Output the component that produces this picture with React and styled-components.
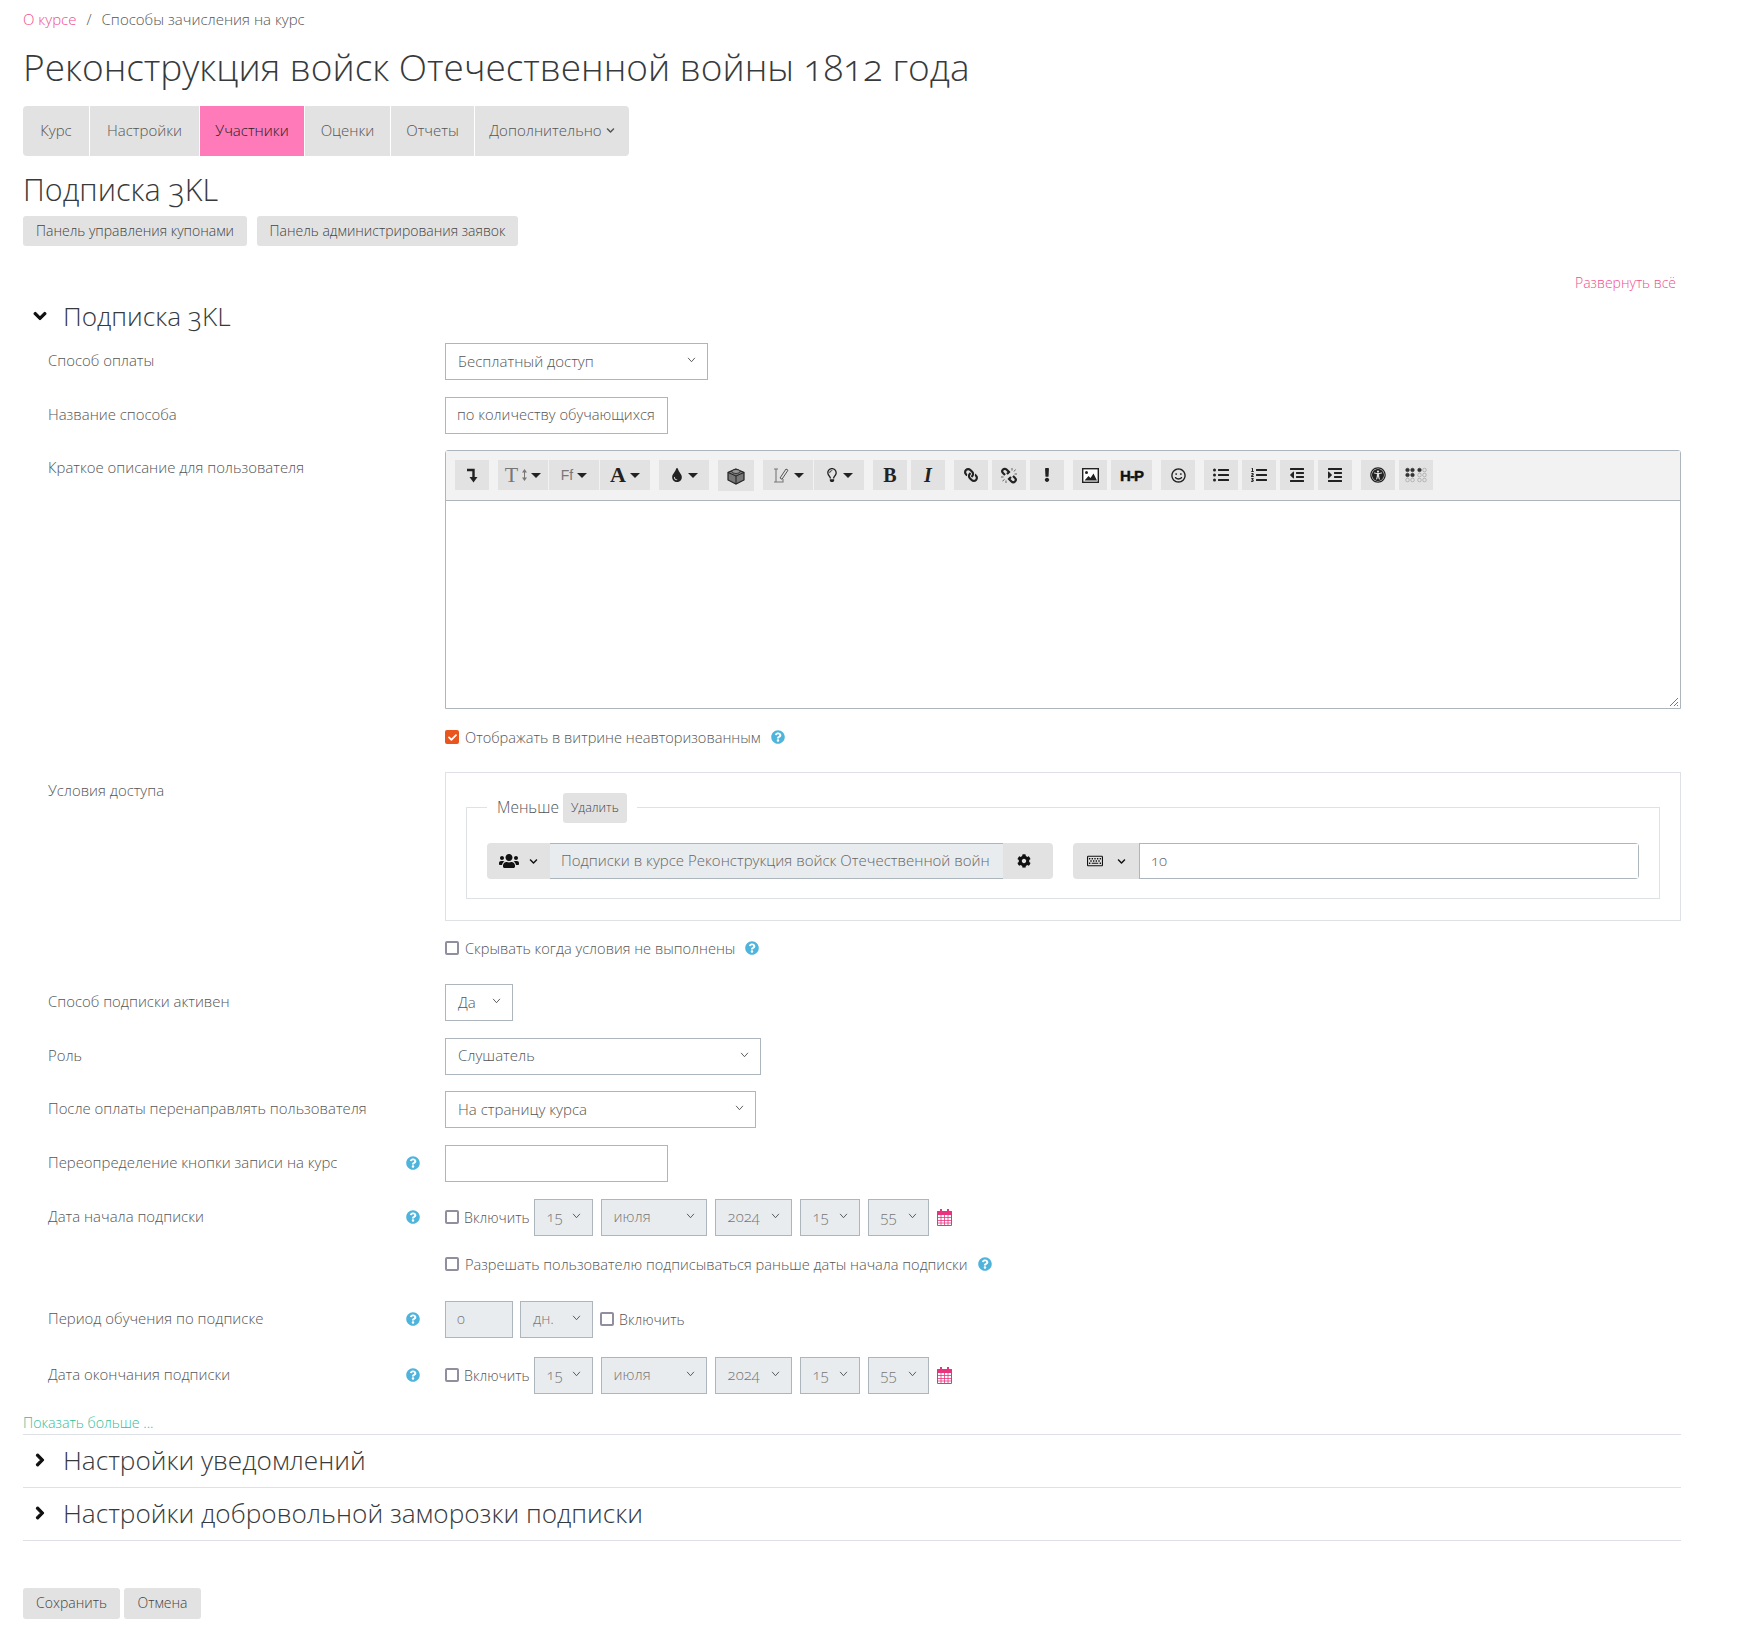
import React from "react";
import styled, { createGlobalStyle } from "styled-components";
import {
  FaChevronDown, FaChevronRight, FaCog, FaUsers, FaRegKeyboard, FaQuestionCircle, FaCheck,
  FaTint, FaRegLightbulb, FaLink, FaExclamation, FaRegSmile,
  FaListUl, FaListOl, FaOutdent, FaIndent, FaUniversalAccess,
} from "react-icons/fa";

const GlobalStyle = createGlobalStyle`
  body {
    margin: 0;
    background: #fff;
    color: #555;
    font-family: "Open Sans", "Noto Sans", sans-serif;
    font-weight: 300;
    font-size: 15px;
    font-variant-numeric: oldstyle-nums;
  }
`;

const Page = styled.div`
  padding: 0 57px 0 23px;
  height: 1649px;
  box-sizing: border-box;
`;

const Breadcrumb = styled.div`
  display: flex;
  gap: 10px;
  height: 38px;
  align-items: center;
  font-size: 15px;
  color: #555;
`;
const PinkLink = styled.a`
  color: #f0508f;
`;
const Title = styled.h1`
  margin: 0;
  font-size: 37px;
  font-weight: 300;
  color: #373a3c;
  line-height: 58px;
  height: 68px;
`;
const Tabs = styled.div`
  display: inline-flex;
  gap: 1px;
  height: 50px;
  border-radius: 4px;
  overflow: hidden;
`;
const Tab = styled.div`
  display: flex;
  align-items: center;
  gap: 4px;
  padding: 0 0 2px;
  width: ${(p) => p.$w}px;
  box-sizing: border-box;
  justify-content: center;
  background: ${(p) => (p.$active ? "#ff7ab8" : "#e2e2e2")};
  color: ${(p) => (p.$active ? "#222" : "#555")};
`;
const SubTitle = styled.h2`
  margin: 0;
  font-size: 30.5px;
  font-weight: 300;
  color: #373a3c;
  line-height: 36px;
  padding-top: 15px;
  height: 60px;
  box-sizing: border-box;
`;
const ButtonRow = styled.div`
  display: flex;
  gap: ${(p) => p.$gap || 10}px;
`;
const GrayButton = styled.div`
  display: flex;
  align-items: center;
  justify-content: center;
  box-sizing: border-box;
  padding-bottom: 2px;
  height: ${(p) => p.$h || 30}px;
  width: ${(p) => p.$w}px;
  background: #e2e2e2;
  border-radius: 3px;
  color: #444;
  font-size: ${(p) => p.$size || 14}px;
`;
const ExpandAll = styled.div`
  text-align: right;
  padding-right: 5px;
  margin-top: 26px;
  line-height: 22px;
  color: #f0508f;
  font-size: 14px;
`;
const SectionHead = styled.div`
  display: flex;
  align-items: center;
  height: ${(p) => p.$h}px;
  padding: 0 0 2px 10px;
  margin-bottom: ${(p) => p.$mb || 0}px;
  font-size: 26.2px;
  color: #373a3c;
  border-bottom: ${(p) => (p.$line ? "1px solid #dee2e6" : "none")};
  box-sizing: border-box;
`;
const Arrow = styled.span`
  display: flex;
  width: 30px;
  color: #111;
  font-size: 14px;
  svg {
    stroke: currentColor;
    stroke-width: 40;
  }
`;
const Row = styled.div`
  display: grid;
  grid-template-columns: 397px 1fr;
  padding-left: 25px;
  min-height: ${(p) => p.$h || 37}px;
  margin-top: ${(p) => p.$mt || 0}px;
  margin-bottom: ${(p) => (p.$mb === undefined ? 16.6 : p.$mb)}px;
`;
const Label = styled.div`
  display: flex;
  justify-content: space-between;
  padding: ${(p) => p.$pt || 6}px 25px 0 0;
  line-height: 22px;
  font-size: 14.9px;
  color: #555;
`;
const Help = styled(FaQuestionCircle)`
  color: #4fb4dc;
  font-size: 14px;
  margin-left: ${(p) => p.$ml || 0}px;
  flex: none;
`;
const LabelHelp = styled(Help)`
  margin-top: 5px;
`;
const Field = styled.div`
  display: flex;
  align-items: center;
  gap: ${(p) => p.$gap || 0}px;
`;
const CheckGroup = styled.span`
  display: flex;
  align-items: center;
  gap: 5px;
  font-size: 14.2px;
  margin-right: ${(p) => p.$mr || 0}px;
`;
const SelectBox = styled.div`
  position: relative;
  display: flex;
  align-items: center;
  box-sizing: border-box;
  width: ${(p) => p.$w}px;
  height: 37px;
  padding: 0 0 2px 12px;
  border: 1px solid #adb5bd;
  background: ${(p) => (p.$off ? "#e9ecef" : "#fff")};
  color: ${(p) => (p.$off ? "#777" : "#555")};
`;
const SelectArrow = styled.svg`
  position: absolute;
  right: 11px;
  top: 13px;
  width: 9px;
  height: 6px;
  fill: none;
  stroke: #444;
  stroke-width: 1;
`;
const Input = styled.div`
  display: flex;
  align-items: center;
  box-sizing: border-box;
  width: ${(p) => p.$w}px;
  height: 37px;
  padding: 0 11px 2px;
  font-size: 14.7px;
  border: 1px solid #adb5bd;
  white-space: nowrap;
  background: ${(p) => (p.$off ? "#e9ecef" : "#fff")};
  color: ${(p) => (p.$off ? "#777" : "#555")};
`;
const Editor = styled.div`
  position: relative;
  height: 259px;
  border: 1px solid #adb5bd;
  border-radius: 3px 3px 0 0;
  box-sizing: border-box;
`;
const Toolbar = styled.div`
  display: flex;
  gap: 9px;
  height: 50px;
  padding: 9px 0 0 9px;
  box-sizing: border-box;
  background: #f2f2f2;
  border-bottom: 1px solid #adb5bd;
`;
const ToolGroup = styled.div`
  display: flex;
  gap: ${(p) => (p.$joined ? 1 : 4)}px;
  align-items: flex-start;
`;
const ToolBtn = styled.div`
  display: flex;
  align-items: center;
  justify-content: center;
  gap: 4px;
  width: ${(p) => p.$w || 34}px;
  height: ${(p) => p.$h || 30}px;
  background: #e2e2e2;
  color: #222;
  font-size: 14px;
`;
const Caret = styled.span`
  width: 0;
  height: 0;
  border-left: 5px solid transparent;
  border-right: 5px solid transparent;
  border-top: 5px solid #222;
`;
const SerifGlyph = styled.span`
  font-family: "Liberation Serif", serif;
  font-weight: ${(p) => (p.$light ? 400 : 700)};
  font-style: ${(p) => (p.$italic ? "italic" : "normal")};
  font-size: ${(p) => p.$size || 20}px;
  color: ${(p) => (p.$light ? "#777" : "#222")};
`;
const SansGlyph = styled.span`
  font-family: "Liberation Sans", sans-serif;
  font-size: ${(p) => p.$size || 14}px;
  font-weight: ${(p) => (p.$bold ? 700 : 400)};
  color: ${(p) => (p.$bold ? "#111" : "#777")};
  letter-spacing: ${(p) => p.$ls || 0}px;
  -webkit-text-stroke: ${(p) => (p.$bold ? "0.4px #111" : "0")};
`;
const Flip = styled.span`
  display: flex;
  transform: scaleX(-1);
`;
const Grip = styled.svg`
  position: absolute;
  right: 1px;
  bottom: 1px;
  width: 12px;
  height: 12px;
  stroke: #777;
  stroke-width: 1;
`;
const CheckLine = styled.div`
  display: flex;
  align-items: center;
  height: ${(p) => p.$h || 22}px;
  margin: ${(p) => p.$m || 0};
  padding-left: 422px;
  font-size: 14.6px;
`;
const Box = styled.span`
  display: flex;
  align-items: center;
  justify-content: center;
  flex: none;
  box-sizing: border-box;
  width: 14px;
  height: 14px;
  margin-right: ${(p) => p.$mr || 0}px;
  border-radius: 2px;
  border: ${(p) => (p.$on ? "none" : "2px solid #8f8f9d")};
  background: ${(p) => (p.$on ? "#e9551f" : "#fff")};
  color: #fff;
  font-size: 9px;
`;
const AccessPanel = styled.div`
  box-sizing: border-box;
  height: 149px;
  border: 1px solid #dee2e6;
  padding: 21px 20px 0;
`;
const Fieldset = styled.div`
  position: relative;
  box-sizing: border-box;
  height: 92px;
  margin-top: 13px;
  border: 1px solid #dee2e6;
  padding: 35px 20px 0;
  display: flex;
  justify-content: space-between;
`;
const Legend = styled.div`
  position: absolute;
  left: 20px;
  top: -15px;
  display: flex;
  align-items: center;
  gap: 4px;
  padding: 0 10px;
  background: #fff;
  font-size: 15.5px;
`;
const LegendText = styled.span`
  margin-top: -3px;
`;
const Group = styled.div`
  display: flex;
  height: 36px;
  width: ${(p) => p.$w}px;
  flex: none;
  border-radius: 4px;
  overflow: hidden;
`;
const Addon = styled.div`
  display: flex;
  align-items: center;
  justify-content: center;
  box-sizing: border-box;
  padding-right: ${(p) => p.$pr || 0}px;
  gap: ${(p) => p.$gap || 10}px;
  flex: none;
  width: ${(p) => p.$w}px;
  background: #e2e2e2;
  color: #111;
  font-size: 16px;
`;
const SmallChevron = styled(FaChevronDown)`
  font-size: 9px;
`;
const GroupInput = styled.div`
  flex: 1;
  min-width: 0;
  display: flex;
  align-items: center;
  padding: 0 0 2px 11px;
  border: 1px solid #adb5bd;
  border-width: ${(p) => (p.$off ? "1px 0" : "1px")};
  background: ${(p) => (p.$off ? "#e9ecef" : "#fff")};
  white-space: nowrap;
  overflow: hidden;
  color: #666;
`;
const MoreLink = styled.div`
  color: #2fc09a;
  height: 22px;
  line-height: 22px;
  font-size: 14.2px;
  margin-top: 18px;
`;
const Divider = styled.div`
  border-top: 1px solid #dee2e6;
`;
const Actions = styled(ButtonRow)`
  margin-top: 47px;
`;

const Select = ({ w, off, children }) => (
  <SelectBox $w={w} $off={off}>
    {children}
    <SelectArrow viewBox="0 0 10 7">
      <polyline points="1,1 5,5.5 9,1" />
    </SelectArrow>
  </SelectBox>
);

const CubeIcon = () => (
  <svg width="20" height="20" viewBox="0 0 20 20">
    <path d="M10 3 18 6.5V14L10 18 2 14V6.5Z" fill="#777" stroke="#222" strokeWidth="1.2" />
    <path d="M2 6.5 10 10 18 6.5M10 10V18" fill="none" stroke="#222" strokeWidth="1" />
    <ellipse cx="10" cy="5.5" rx="4" ry="2" fill="#999" stroke="#222" strokeWidth="0.8" />
  </svg>
);
const CollapseIcon = () => (
  <svg width="12" height="15" viewBox="0 0 12 15">
    <path d="M1 2H7.5V10" fill="none" stroke="#222" strokeWidth="2.4" />
    <path d="M3.5 9H11.5L7.5 14.5Z" fill="#222" />
  </svg>
);
const SizeArrows = () => (
  <svg width="5" height="14" viewBox="0 0 5 14">
    <path d="M2.5 1 5 4.5H0ZM2.5 13 5 9.5H0Z" fill="#777" />
    <path d="M2.5 4V10" stroke="#777" />
  </svg>
);
const EquationIcon = () => (
  <svg width="18" height="18" viewBox="0 0 18 18">
    <path d="M2 3H6M4 3V16M2 16H11V13" fill="none" stroke="#777" strokeWidth="1.1" />
    <path d="M8 12 14 3l2 1.2-6 9Z" fill="none" stroke="#555" strokeWidth="1" />
  </svg>
);
const ImageIcon = () => (
  <svg width="17" height="15" viewBox="0 0 17 15">
    <rect x="0.7" y="0.7" width="15.6" height="13.6" fill="#fff" stroke="#222" strokeWidth="1.4" />
    <path d="M2.5 12.5 6.5 8l2 2 3-4.5 3.5 7Z" fill="#222" />
    <circle cx="4.5" cy="4.5" r="1.5" fill="#222" />
  </svg>
);
const UnlinkIcon = () => (
  <svg width="18" height="17" viewBox="0 0 18 17" fill="none" stroke="#222" strokeWidth="2.2">
    <path d="M5 8 3 6a2.4 2.4 0 0 1 3.5-3.5L9 5 7 7" />
    <path d="M13 9l2 2a2.4 2.4 0 0 1-3.5 3.5L9 12l2-2" />
    <path d="M12 1v2.5M15.5 2.5 14 4.5M17 7h-2.5M1 10h2.5M2.5 14 4.5 12.5M6 16v-2.5" stroke="#555" strokeWidth="0.9" />
  </svg>
);
const BrailleIcon = () => (
  <svg width="22" height="16" viewBox="0 0 22 16">
    {[0, 1, 2].flatMap((r) =>
      [0, 1, 2, 3].map((c) => {
        const filled = (r === 0 && c < 3) || (r === 1 && c < 2);
        return (
          <circle key={`${r}${c}`} cx={2.5 + c * 5 + (c > 1 ? 2 : 0)} cy={3 + r * 5} r="1.8"
            fill={filled ? "#333" : "none"} stroke={filled ? "#333" : "#999"} strokeWidth="0.6" />
        );
      })
    )}
  </svg>
);
const CalendarIcon = () => (
  <svg width="15" height="17" viewBox="0 0 15 17">
    <path d="M3 0h2v3H3zM10 0h2v3h-2z" fill="#e8337f" />
    <path d="M.5 2.5h14v14H.5z" fill="#fff" stroke="#e8337f" />
    <path d="M.5 2.5h14v3H.5z" fill="#e8337f" stroke="#e8337f" />
    <path d="M.5 8.5h14M.5 11.5h14M.5 14h14M4 5.5v11M7.5 5.5v11M11 5.5v11" stroke="#e8337f" strokeWidth="0.8" />
  </svg>
);

const DateFields = () => (
  <Field $gap={8}>
    <CheckGroup $mr={-4}><Box /><span>Включить</span></CheckGroup>
    <Select w={59} off>15</Select>
    <Select w={106} off>июля</Select>
    <Select w={77} off>2024</Select>
    <Select w={60} off>15</Select>
    <Select w={61} off>55</Select>
    <CalendarIcon />
  </Field>
);

export default function App() {
  return (
    <Page>
      <GlobalStyle />
      <Breadcrumb>
        <PinkLink>О курсе</PinkLink>
        <span>/</span>
        <span>Способы зачисления на курс</span>
      </Breadcrumb>
      <Title>Реконструкция войск Отечественной войны 1812 года</Title>
      <Tabs>
        <Tab $w={66}>Курс</Tab>
        <Tab $w={109}>Настройки</Tab>
        <Tab $w={104} $active>Участники</Tab>
        <Tab $w={85}>Оценки</Tab>
        <Tab $w={83}>Отчеты</Tab>
        <Tab $w={154}>Дополнительно <SmallChevron /></Tab>
      </Tabs>
      <SubTitle>Подписка 3KL</SubTitle>
      <ButtonRow>
        <GrayButton $w={224}>Панель управления купонами</GrayButton>
        <GrayButton $w={261}>Панель администрирования заявок</GrayButton>
      </ButtonRow>
      <ExpandAll>Развернуть всё</ExpandAll>
      <SectionHead $h={46} $mb={3}>
        <Arrow><FaChevronDown /></Arrow>
        Подписка 3KL
      </SectionHead>

      <Row>
        <Label>Способ оплаты</Label>
        <Field><Select w={263}>Бесплатный доступ</Select></Field>
      </Row>
      <Row>
        <Label>Название способа</Label>
        <Field><Input $w={223}>по количеству обучающихся</Input></Field>
      </Row>
      <Row $mb={17}>
        <Label>Краткое описание для пользователя</Label>
        <Editor>
          <Toolbar>
            <ToolGroup><ToolBtn><CollapseIcon /></ToolBtn></ToolGroup>
            <ToolGroup $joined>
              <ToolBtn $w={50}><SerifGlyph $light $size={22}>T</SerifGlyph><SizeArrows /><Caret /></ToolBtn>
              <ToolBtn $w={50}><SansGlyph>Ff</SansGlyph><Caret /></ToolBtn>
              <ToolBtn $w={50}><SerifGlyph $size={22}>A</SerifGlyph><Caret /></ToolBtn>
            </ToolGroup>
            <ToolGroup><ToolBtn $w={50}><FaTint /><Caret /></ToolBtn></ToolGroup>
            <ToolGroup><ToolBtn $w={36} $h={31}><CubeIcon /></ToolBtn></ToolGroup>
            <ToolGroup $joined>
              <ToolBtn $w={50}><EquationIcon /><Caret /></ToolBtn>
              <ToolBtn $w={50}><FaRegLightbulb /><Caret /></ToolBtn>
            </ToolGroup>
            <ToolGroup>
              <ToolBtn><SerifGlyph>B</SerifGlyph></ToolBtn>
              <ToolBtn><SerifGlyph $italic>I</SerifGlyph></ToolBtn>
            </ToolGroup>
            <ToolGroup>
              <ToolBtn><Flip><FaLink /></Flip></ToolBtn>
              <ToolBtn><UnlinkIcon /></ToolBtn>
              <ToolBtn><FaExclamation /></ToolBtn>
            </ToolGroup>
            <ToolGroup>
              <ToolBtn><ImageIcon /></ToolBtn>
              <ToolBtn $w={41}><SansGlyph $bold $size={15} $ls={-1}>H-P</SansGlyph></ToolBtn>
            </ToolGroup>
            <ToolGroup><ToolBtn><FaRegSmile size={15} /></ToolBtn></ToolGroup>
            <ToolGroup>
              <ToolBtn><FaListUl size={16} /></ToolBtn>
              <ToolBtn><FaListOl size={16} /></ToolBtn>
              <ToolBtn><FaOutdent size={16} /></ToolBtn>
              <ToolBtn><FaIndent size={16} /></ToolBtn>
            </ToolGroup>
            <ToolGroup>
              <ToolBtn><FaUniversalAccess size={16} /></ToolBtn>
              <ToolBtn><BrailleIcon /></ToolBtn>
            </ToolGroup>
          </Toolbar>
          <Grip viewBox="0 0 12 12">
            <path d="M11 3 3 11M11 7 7 11M11 10 10 11" />
          </Grip>
        </Editor>
      </Row>
      <CheckLine>
        <Box $mr={6} $on><FaCheck /></Box>
        Отображать в витрине неавторизованным
        <Help $ml={10} />
      </CheckLine>

      <Row $h={149} $mb={16} $mt={24}>
        <Label $pt={7}>Условия доступа</Label>
        <AccessPanel>
          <Fieldset>
            <Legend>
              <LegendText>Меньше</LegendText>
              <GrayButton $w={64} $h={30} $size={12.5}>Удалить</GrayButton>
            </Legend>
            <Group $w={566}>
              <Addon $w={63}><FaUsers size={20} /><SmallChevron /></Addon>
              <GroupInput $off>Подписки в курсе Реконструкция войск Отечественной войн</GroupInput>
              <Addon $w={50} $pr={8}><FaCog size={14} /></Addon>
            </Group>
            <Group $w={566}>
              <Addon $w={66} $gap={14}><FaRegKeyboard /><SmallChevron /></Addon>
              <GroupInput>10</GroupInput>
            </Group>
          </Fieldset>
        </AccessPanel>
      </Row>
      <CheckLine $m="0 0 25px">
        <Box $mr={6} />
        Скрывать когда условия не выполнены
        <Help $ml={10} />
      </CheckLine>

      <Row>
        <Label>Способ подписки активен</Label>
        <Field><Select w={68}>Да</Select></Field>
      </Row>
      <Row>
        <Label>Роль</Label>
        <Field><Select w={316}>Слушатель</Select></Field>
      </Row>
      <Row>
        <Label>После оплаты перенаправлять пользователя</Label>
        <Field><Select w={311}>На страницу курса</Select></Field>
      </Row>
      <Row>
        <Label>Переопределение кнопки записи на курс<LabelHelp /></Label>
        <Field><Input $w={223} /></Field>
      </Row>
      <Row $mb={17}>
        <Label>Дата начала подписки<LabelHelp /></Label>
        <DateFields />
      </Row>
      <CheckLine $m="0 0 26px">
        <Box $mr={6} />
        Разрешать пользователю подписываться раньше даты начала подписки
        <Help $ml={10} />
      </CheckLine>
      <Row $mb={19}>
        <Label>Период обучения по подписке<LabelHelp /></Label>
        <Field $gap={7}>
          <Input $w={68} $off>0</Input>
          <Select w={73} off>дн.</Select>
          <CheckGroup><Box /><span>Включить</span></CheckGroup>
        </Field>
      </Row>
      <Row $mb={0}>
        <Label>Дата окончания подписки<LabelHelp /></Label>
        <DateFields />
      </Row>
      <MoreLink>Показать больше ...</MoreLink>
      <Divider />
      <SectionHead $h={53} $line>
        <Arrow><FaChevronRight /></Arrow>
        Настройки уведомлений
      </SectionHead>
      <SectionHead $h={53} $line>
        <Arrow><FaChevronRight /></Arrow>
        Настройки добровольной заморозки подписки
      </SectionHead>
      <Actions $gap={4}>
        <GrayButton $w={97} $h={31}>Сохранить</GrayButton>
        <GrayButton $w={77} $h={31}>Отмена</GrayButton>
      </Actions>
    </Page>
  );
}
